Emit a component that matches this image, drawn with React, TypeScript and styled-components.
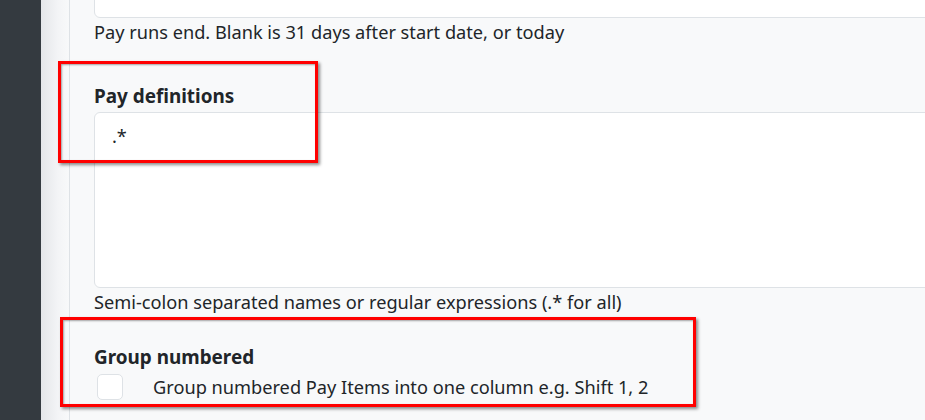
import React from "react";
import styled, { createGlobalStyle } from "styled-components";

const Global = createGlobalStyle`
  html, body { margin: 0; padding: 0; overflow: hidden; }
  body {
    font-family: "Noto Sans", "Open Sans", sans-serif;
    color: #212529;
    background: #f8f9fa;
  }
`;

const Shell = styled.div`
  display: flex;
  width: 925px;
  height: 420px;
  overflow: hidden;
`;

const Sidebar = styled.div`
  flex: 0 0 41px;
  background: #343a40;
`;

const Gutter = styled.div`
  flex: 0 0 28px;
  background: linear-gradient(to right, #e4e6e9, #f3f4f6 60%, #f8f9fa);
  border-right: 1px solid #dee2e6;
`;

const Main = styled.main`
  flex: 1 0 auto;
  position: relative;
  padding-left: 24px;
  background: #f8f9fa;
`;

const Form = styled.div`
  width: 900px;
  margin-top: -28px;
`;

const Group = styled.div<{ $gap?: number }>`
  margin-bottom: ${(p) => p.$gap ?? 0}px;
`;

const Label = styled.div`
  font-weight: 700;
  font-size: 18.9px;
  line-height: 24px;
  margin-bottom: 4px;
`;

const Input = styled.div`
  height: 44px;
  background: #fff;
  border: 1px solid #dee2e6;
  border-radius: 6px;
`;

const TextArea = styled.div`
  background: #fff;
  border: 1px solid #dee2e6;
  border-radius: 6px;
  padding: 11px 17px;
  font-size: 18.2px;
  line-height: 24px;
  box-sizing: border-box;
  height: 176px;
`;

const Help = styled.div`
  font-size: 18.2px;
  line-height: 24px;
  margin-top: 2px;
`;

const CheckRow = styled.label`
  display: flex;
  align-items: center;
  gap: 30px;
  padding-left: 3px;
  font-size: 18.2px;
  line-height: 26px;
  margin-top: 5px;
`;

const Box = styled.span`
  width: 26px;
  height: 26px;
  box-sizing: border-box;
  background: #fff;
  border: 1px solid #dee2e6;
  border-radius: 5px;
  flex: 0 0 auto;
`;

const Mark = styled.div<{ $x: number; $y: number; $w: number; $h: number }>`
  position: absolute;
  left: ${(p) => p.$x}px;
  top: ${(p) => p.$y}px;
  width: ${(p) => p.$w}px;
  height: ${(p) => p.$h}px;
  border: 3px solid #ff0000;
  box-sizing: border-box;
  box-shadow: 2px 2px 3px rgba(0, 0, 0, 0.45), inset 1px 1px 2px rgba(0, 0, 0, 0.35);
  pointer-events: none;
`;

export default function App() {
  return (
    <>
      <Global />
      <Shell>
        <Sidebar />
        <Gutter />
        <Main>
          <Form>
            <Group $gap={40}>
              <Input />
              <Help>Pay runs end. Blank is 31 days after start date, or today</Help>
            </Group>
            <Group $gap={31}>
              <Label>Pay definitions</Label>
              <TextArea>.*</TextArea>
              <Help>Semi-colon separated names or regular expressions (.* for all)</Help>
            </Group>
            <Group>
              <Label>Group numbered</Label>
              <CheckRow>
                <Box />
                Group numbered Pay Items into one column e.g. Shift 1, 2
              </CheckRow>
            </Group>
          </Form>
          <Mark $x={-12} $y={61} $w={260} $h={102} />
          <Mark $x={-10} $y={317} $w={636} $h={90} />
        </Main>
      </Shell>
    </>
  );
}
